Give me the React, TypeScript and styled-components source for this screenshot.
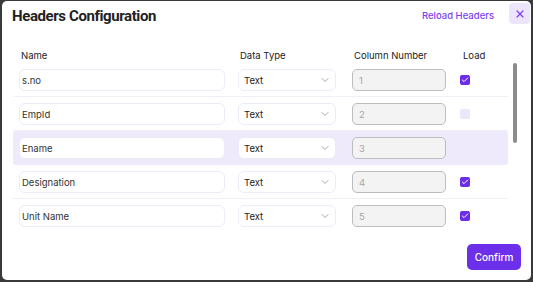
import { Check, ChevronDown, X } from 'lucide-react';
import type { ReactElement } from 'react';
import styled, { createGlobalStyle } from 'styled-components';

interface HeaderRow {
	name: string;
	load: boolean | null;
	active?: boolean;
}

const rows: HeaderRow[] = [
	{ name: 's.no', load: true },
	{ name: 'EmpId', load: false },
	{ name: 'Ename', load: null, active: true },
	{ name: 'Designation', load: true },
	{ name: 'Unit Name', load: true },
];

const GlobalStyle = createGlobalStyle`
	html, body {
		margin: 0;
		padding: 0;
		background: #3a3a3a;
	}
	body {
		font-family: Inter, "Noto Sans", sans-serif;
	}
	* {
		box-sizing: border-box;
	}
`;

const Dialog = styled.div`
	margin: 1px 2px 2px 2px;
	width: 529px;
	height: 279px;
	background: #ffffff;
	border-radius: 5px;
	display: flex;
	flex-direction: column;
	overflow: hidden;
`;

const TopBar = styled.div`
	display: flex;
	align-items: flex-start;
	padding: 0 1px 0 10px;
	height: 34px;
`;

const Title = styled.h1`
	margin: 6px 0 0;
	flex: 1;
	font-family: Roboto, "Liberation Sans", sans-serif;
	font-size: 15px;
	font-weight: 700;
	letter-spacing: -0.4px;
	color: #222;
`;

const ReloadLink = styled.button`
	margin: 9px 15px 0 0;
	padding: 0;
	border: none;
	background: none;
	font-family: Inter, sans-serif;
	font-size: 9.5px;
	font-weight: 500;
	color: #7b3ff0;
	cursor: pointer;
`;

const CloseButton = styled.button`
	margin-top: 2px;
	width: 21px;
	height: 21px;
	border: none;
	border-radius: 4px;
	background: #ede5fc;
	color: #7b3ff0;
	display: flex;
	align-items: center;
	justify-content: center;
	padding: 0;
`;

const HeadRow = styled.div`
	display: grid;
	grid-template-columns: 219px 114px 109px 1fr;
	align-items: center;
	padding: 12px 0 0 19px;
	height: 28px;
	font-size: 9.5px;
	color: #222;
`;

const Body = styled.div`
	display: flex;
	align-items: flex-start;
	gap: 5px;
	margin-left: 11px;
	height: 172px;
	overflow: hidden;
`;

const RowList = styled.div`
	width: 495px;
`;

const ScrollTrack = styled.div`
	width: 4px;
	height: 172px;
`;

const ScrollThumb = styled.div`
	width: 4px;
	height: 80px;
	border-radius: 2px;
	background: #8c8c8c;
`;

const Row = styled.div<{ $active?: boolean }>`
	display: grid;
	grid-template-columns: 206px 98px 97px 1fr;
	column-gap: 13px;
	align-items: center;
	padding: 6px 0 5px 6px;
	border-bottom: 1px solid ${(p) => (p.$active ? 'transparent' : '#f1eff6')};
	background: ${(p) => (p.$active ? '#efe9fc' : 'transparent')};
	border-radius: ${(p) => (p.$active ? '3px' : '0')};

	&:last-child {
		border-bottom-color: transparent;
	}
`;

const NameInput = styled.div`
	height: 22px;
	border: 1px solid #eeeaf8;
	border-radius: 6px;
	background: #fff;
	display: flex;
	align-items: center;
	padding: 0 2px;
	font-size: 9.5px;
	color: #333;
`;

const Select = styled(NameInput)`
	justify-content: space-between;
	padding: 0 4px 0 5px;
	color: #222;
`;

const NumberInput = styled.div`
	margin-left: 3px;
	height: 22px;
	border: 1px solid #bdbdbd;
	border-radius: 5px;
	background: #f3f3f3;
	display: flex;
	align-items: center;
	padding: 0 6px;
	font-size: 9.5px;
	color: #a5a5a5;
`;

const CheckBox = styled.span<{ $checked: boolean }>`
	margin-left: 1px;
	width: 10px;
	height: 10px;
	border-radius: 2px;
	background: ${(p) => (p.$checked ? '#6b2ee6' : '#ece6fb')};
	display: flex;
	align-items: center;
	justify-content: center;
	color: #fff;
`;

const Footer = styled.div`
	display: flex;
	justify-content: flex-end;
	padding: 9px 10px 0 0;
`;

const ConfirmButton = styled.button`
	width: 54px;
	height: 26px;
	border: none;
	border-radius: 5px;
	background: #6c30ea;
	color: #fff;
	font-family: Inter, sans-serif;
	font-size: 10px;
	font-weight: 500;
	padding: 0;
`;

export default function App(): ReactElement {
	return (
		<>
			<GlobalStyle />
			<Dialog>
				<TopBar>
					<Title>Headers Configuration</Title>
					<ReloadLink>Reload Headers</ReloadLink>
					<CloseButton>
						<X size={12} strokeWidth={2.4} />
					</CloseButton>
				</TopBar>
				<HeadRow>
					<span>Name</span>
					<span>Data Type</span>
					<span>Column Number</span>
					<span>Load</span>
				</HeadRow>
				<Body>
					<RowList>
						{rows.map((row, i) => (
							<Row key={row.name} $active={row.active}>
								<NameInput>{row.name}</NameInput>
								<Select>
									<span>Text</span>
									<ChevronDown size={12} strokeWidth={1.5} color="#8a8a8a" />
								</Select>
								<NumberInput>{i + 1}</NumberInput>
								<div>
									{row.load !== null && (
										<CheckBox $checked={row.load}>
											{row.load && <Check size={8} strokeWidth={3} />}
										</CheckBox>
									)}
								</div>
							</Row>
						))}
					</RowList>
					<ScrollTrack>
						<ScrollThumb />
					</ScrollTrack>
				</Body>
				<Footer>
					<ConfirmButton>Confirm</ConfirmButton>
				</Footer>
			</Dialog>
		</>
	);
}
